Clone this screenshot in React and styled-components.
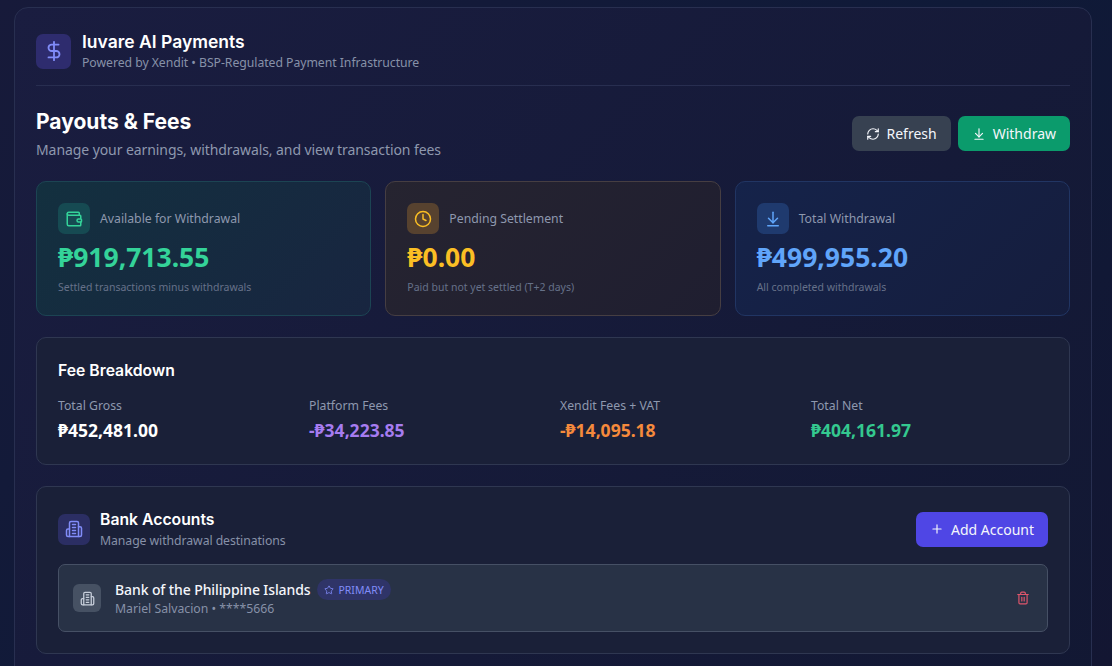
import styled, { createGlobalStyle } from "styled-components";
import {
  ArrowDownToLine,
  Clock,
  DollarSign,
  Plus,
  RefreshCw,
  Star,
  Trash2,
  Wallet,
} from "lucide-react";

const GlobalStyle = createGlobalStyle`
  html, body {
    margin: 0;
    height: 666px;
    overflow: hidden;
    background: #111631;
    font-family: "Noto Sans", sans-serif;
  }
`;

// lucide's current Building2 has no side wings, so this one is drawn by hand
const BankGlyph = ({ size }) => (
  <svg
    width={size}
    height={size}
    viewBox="0 0 24 24"
    fill="none"
    stroke="currentColor"
    strokeWidth="2"
    strokeLinecap="round"
    strokeLinejoin="round"
  >
    <path d="M6 22V4a2 2 0 0 1 2-2h8a2 2 0 0 1 2 2v18Z" />
    <path d="M6 12H4a2 2 0 0 0-2 2v6a2 2 0 0 0 2 2h2" />
    <path d="M18 9h2a2 2 0 0 1 2 2v9a2 2 0 0 1-2 2h-2" />
    <path d="M10 6h4" />
    <path d="M10 10h4" />
    <path d="M10 14h4" />
    <path d="M10 18h4" />
  </svg>
);

const stats = [
  {
    tone: "green",
    Icon: Wallet,
    label: "Available for Withdrawal",
    value: "₱919,713.55",
    note: "Settled transactions minus withdrawals",
  },
  {
    tone: "amber",
    Icon: Clock,
    label: "Pending Settlement",
    value: "₱0.00",
    note: "Paid but not yet settled (T+2 days)",
  },
  {
    tone: "blue",
    Icon: ArrowDownToLine,
    label: "Total Withdrawal",
    value: "₱499,955.20",
    note: "All completed withdrawals",
  },
];

const fees = [
  { label: "Total Gross", value: "₱452,481.00", color: "#ffffff" },
  { label: "Platform Fees", value: "-₱34,223.85", color: "#a67cf0" },
  { label: "Xendit Fees + VAT", value: "-₱14,095.18", color: "#f58a3c" },
  { label: "Total Net", value: "₱404,161.97", color: "#34c88f" },
];

const tones = {
  green: {
    bg: "linear-gradient(135deg, #13303f, #182540)",
    border: "#1c4453",
    icon: "#164a52",
    color: "#34d399",
  },
  amber: {
    bg: "linear-gradient(135deg, #262430, #1f1e30)",
    border: "#463e42",
    icon: "#57422f",
    color: "#fbbf24",
  },
  blue: {
    bg: "linear-gradient(135deg, #15234a, #151d3d)",
    border: "#213563",
    icon: "#1f3a6e",
    color: "#60a5fa",
  },
};

export default function App() {
  return (
    <>
      <GlobalStyle />
      <Page>
        <Shell>
          <Brand>
            <BrandIcon>
              <DollarSign size={22} strokeWidth={2} />
            </BrandIcon>
            <div>
              <BrandName>Iuvare AI Payments</BrandName>
              <BrandSub>Powered by Xendit • BSP-Regulated Payment Infrastructure</BrandSub>
            </div>
          </Brand>

          <TitleRow>
            <div>
              <PageTitle>Payouts &amp; Fees</PageTitle>
              <PageSub>Manage your earnings, withdrawals, and view transaction fees</PageSub>
            </div>
            <Actions>
              <Button $bg="#374151">
                <RefreshCw size={14} />
                Refresh
              </Button>
              <Button $bg="#0b9b6c">
                <ArrowDownToLine size={14} />
                Withdraw
              </Button>
            </Actions>
          </TitleRow>

          <StatGrid>
            {stats.map(({ tone, Icon, label, value, note }) => (
              <StatCard key={label} $tone={tone}>
                <StatHead>
                  <StatIcon $tone={tone}>
                    <Icon size={18} />
                  </StatIcon>
                  <StatLabel>{label}</StatLabel>
                </StatHead>
                <StatValue $tone={tone}>{value}</StatValue>
                <StatNote>{note}</StatNote>
              </StatCard>
            ))}
          </StatGrid>

          <Panel $pad="22px 21px 22px">
            <PanelTitle>Fee Breakdown</PanelTitle>
            <FeeGrid>
              {fees.map((fee) => (
                <div key={fee.label}>
                  <FeeLabel>{fee.label}</FeeLabel>
                  <FeeValue $color={fee.color}>{fee.value}</FeeValue>
                </div>
              ))}
            </FeeGrid>
          </Panel>

          <Panel $pad="22px 21px 21px">
            <BankHead>
              <BankTitle>
                <BankIcon>
                  <BankGlyph size={18} />
                </BankIcon>
                <div>
                  <BankName>Bank Accounts</BankName>
                  <BankSub>Manage withdrawal destinations</BankSub>
                </div>
              </BankTitle>
              <Button $bg="#4f46e5">
                <Plus size={14} />
                Add Account
              </Button>
            </BankHead>

            <AccountRow>
              <AccountIcon>
                <BankGlyph size={15} />
              </AccountIcon>
              <AccountInfo>
                <AccountTop>
                  <AccountName>Bank of the Philippine Islands</AccountName>
                  <PrimaryBadge>
                    <Star size={10} />
                    PRIMARY
                  </PrimaryBadge>
                </AccountTop>
                <AccountNumber>Mariel Salvacion • ****5666</AccountNumber>
              </AccountInfo>
              <DeleteButton>
                <Trash2 size={14} />
              </DeleteButton>
            </AccountRow>
          </Panel>
        </Shell>
      </Page>
    </>
  );
}

const Page = styled.div`
  box-sizing: border-box;
  height: 666px;
  padding: 7px 20px 0 14px;
  background: linear-gradient(135deg, #171a3a, #0f1a38 55%, #131632);
  overflow: hidden;
`;

const Shell = styled.main`
  box-sizing: border-box;
  width: 1078px;
  min-height: 700px;
  padding: 25px 21px;
  border: 1px solid #282f50;
  border-radius: 14px;
  background: linear-gradient(135deg, #1a1d40, #121833);
`;

const Brand = styled.header`
  display: flex;
  align-items: center;
  gap: 11px;
  height: 36px;
  padding-bottom: 16px;
  border-bottom: 1px solid #282e50;
`;

const BrandIcon = styled.div`
  display: flex;
  align-items: center;
  justify-content: center;
  width: 35px;
  height: 35px;
  border-radius: 7px;
  background: #2e2c6e;
  color: #818cf8;
`;

const BrandName = styled.h1`
  margin: 0;
  font: 600 17.5px/21px Inter, sans-serif;
  color: #ffffff;
`;

const BrandSub = styled.p`
  margin: 2px 0 0;
  font-size: 12.25px;
  line-height: 17px;
  letter-spacing: -0.05px;
  color: #8791a8;
`;

const TitleRow = styled.section`
  display: flex;
  justify-content: space-between;
  align-items: center;
  margin: 21px 0 21px;
`;

const PageTitle = styled.h2`
  margin: 0;
  font: 700 21px/29px Inter, sans-serif;
  color: #ffffff;
`;

const PageSub = styled.p`
  margin: 4px 0 0;
  font-size: 14px;
  line-height: 20px;
  letter-spacing: -0.08px;
  color: #8e98ae;
`;

const Actions = styled.div`
  display: flex;
  gap: 7px;
`;

const Button = styled.button`
  display: flex;
  align-items: center;
  gap: 7px;
  height: 35px;
  padding: 0 14px;
  border: 0;
  border-radius: 7px;
  background: ${(p) => p.$bg};
  color: #f4f6fb;
  font: 400 14px "Noto Sans", sans-serif;
`;

const StatGrid = styled.section`
  display: grid;
  grid-template-columns: repeat(3, 1fr);
  gap: 14px;
`;

const StatCard = styled.article`
  box-sizing: border-box;
  height: 135px;
  padding: 21px;
  border: 1px solid ${(p) => tones[p.$tone].border};
  border-radius: 10px;
  background: ${(p) => tones[p.$tone].bg};
`;

const StatHead = styled.div`
  display: flex;
  align-items: center;
  gap: 10px;
`;

const StatIcon = styled.div`
  display: flex;
  align-items: center;
  justify-content: center;
  width: 32px;
  height: 31px;
  border-radius: 7px;
  background: ${(p) => tones[p.$tone].icon};
  color: ${(p) => tones[p.$tone].color};
`;

const StatLabel = styled.span`
  font-size: 12.25px;
  color: #8e98ae;
`;

const StatValue = styled.div`
  margin-top: 5px;
  font-size: 26.5px;
  font-weight: 700;
  line-height: 36px;
  color: ${(p) => tones[p.$tone].color};
`;

const StatNote = styled.p`
  margin: 5px 0 0;
  font-size: 10.5px;
  line-height: 15px;
  color: #667189;
`;

const Panel = styled.section`
  box-sizing: border-box;
  margin-top: 21px;
  padding: ${(p) => p.$pad};
  border: 1px solid #2f3751;
  border-radius: 10px;
  background: #1a2038;
`;

const PanelTitle = styled.h3`
  margin: 0;
  font: 600 15.75px/21px Inter, sans-serif;
  color: #ffffff;
`;

const FeeGrid = styled.div`
  display: grid;
  grid-template-columns: repeat(4, 1fr);
  gap: 14px;
  margin-top: 16px;
`;

const FeeLabel = styled.div`
  font-size: 12.25px;
  line-height: 17px;
  color: #8e98ae;
`;

const FeeValue = styled.div`
  margin-top: 4px;
  font-size: 17.5px;
  font-weight: 700;
  line-height: 24px;
  color: ${(p) => p.$color};
`;

const BankHead = styled.div`
  display: flex;
  justify-content: space-between;
  align-items: center;
`;

const BankTitle = styled.div`
  display: flex;
  align-items: center;
  gap: 10px;
`;

const BankIcon = styled.div`
  display: flex;
  align-items: center;
  justify-content: center;
  width: 32px;
  height: 31px;
  border-radius: 7px;
  background: #2b2e63;
  color: #818cf8;
`;

const BankName = styled.div`
  font: 600 15.75px/21px Inter, sans-serif;
  color: #ffffff;
`;

const BankSub = styled.div`
  margin-top: 2px;
  font-size: 12.25px;
  line-height: 17px;
  letter-spacing: -0.07px;
  color: #8791a8;
`;

const AccountRow = styled.div`
  display: flex;
  align-items: center;
  box-sizing: border-box;
  height: 68px;
  margin-top: 15px;
  padding: 0 14px;
  border: 1px solid #465065;
  border-radius: 7px;
  background: #283246;
`;

const AccountIcon = styled.div`
  display: flex;
  align-items: center;
  justify-content: center;
  width: 28px;
  height: 28px;
  border-radius: 6px;
  background: #465163;
  color: #c8cfdb;
`;

const AccountInfo = styled.div`
  flex: 1;
  margin-left: 14px;
`;

const AccountTop = styled.div`
  display: flex;
  align-items: center;
  gap: 7px;
`;

const AccountName = styled.span`
  font-size: 14px;
  font-weight: 500;
  letter-spacing: -0.1px;
  color: #f4f6fb;
`;

const PrimaryBadge = styled.span`
  display: inline-flex;
  align-items: center;
  gap: 4px;
  height: 21px;
  padding: 0 7px;
  border-radius: 11px;
  background: #2f3468;
  color: #818cf8;
  font-size: 10.5px;
`;

const AccountNumber = styled.div`
  margin-top: 1px;
  font-size: 12.25px;
  line-height: 16px;
  color: #8791a8;
`;

const DeleteButton = styled.button`
  display: flex;
  padding: 4px 0;
  margin-right: 3px;
  border: 0;
  background: none;
  color: #e0566c;
`;
